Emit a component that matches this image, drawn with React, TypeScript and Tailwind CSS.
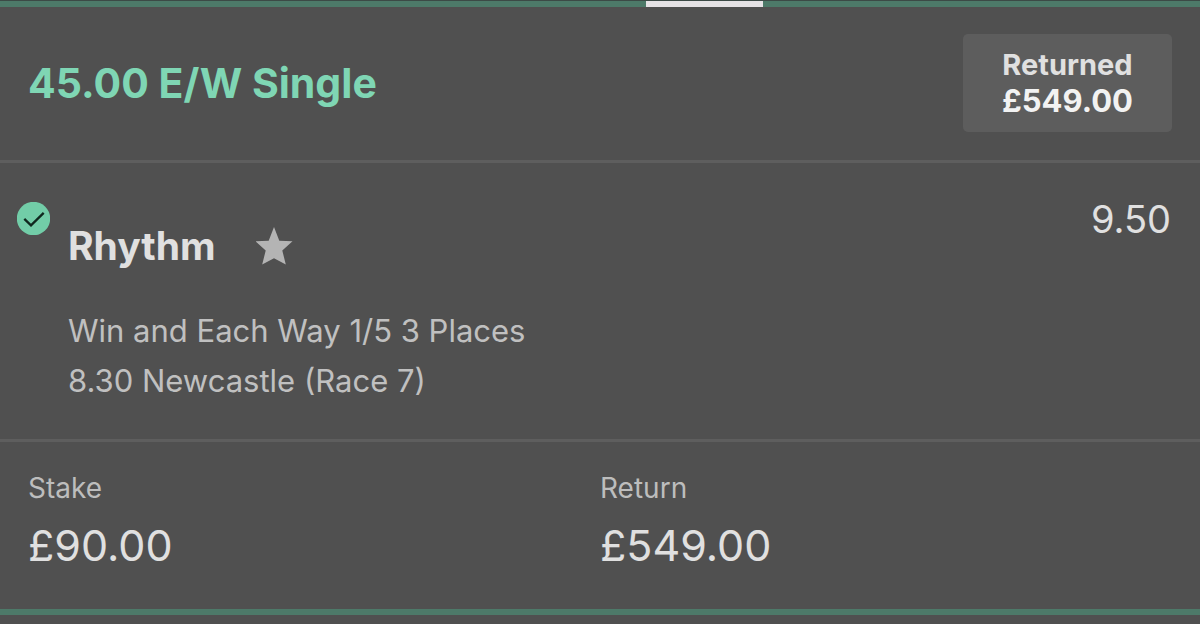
export default function App() {
  return (
    <main className="flex min-h-screen flex-col bg-[#505050] font-['Inter',sans-serif] text-[#e0e0e0]">
      <div className="h-[7px] border-t border-[#3c4a46] bg-[#4d7a69]">
        <div className="ml-[53.8%] h-[6px] w-[117px] bg-[#e6e3e6]" />
      </div>
      <header className="flex items-center justify-between border-b-3 border-[#5e5e5e] px-7 pt-[27px] pb-7">
        <h1 className="text-[41px] leading-[48px] font-bold text-[#7fd6b4]">45.00 E/W Single</h1>
        <div className="flex flex-col rounded-[5px] bg-[#5d5d5d] px-[39px] py-[13px] text-center font-bold">
          <span className="text-[29px] leading-[36px]">Returned</span>
          <span className="text-[31px] leading-[36px] text-[#f2f2f2]">£549.00</span>
        </div>
      </header>
      <section className="flex items-start border-b-3 border-[#5e5e5e] pt-[39px] pr-[29px] pb-[33px] pl-[17px]">
        <svg viewBox="0 0 33 33" className="h-[33px] w-[33px]" role="img" aria-label="Won">
          <circle cx="16.5" cy="16.5" r="16.7" fill="#72cda8" />
          <path d="M7.3 16.8L14 23.3L26.7 10.9" fill="none" stroke="#10281f" strokeWidth="2.3" />
        </svg>
        <div className="ml-[18px] flex-1">
          <div className="flex items-center gap-10 pt-5">
            <h2 className="text-[39px] leading-[48px] font-bold">Rhythm</h2>
            <svg viewBox="0 0 37 38" className="h-[38px] w-[37px]" role="img" aria-label="Favourite">
              <path
                d="M18 0L23.3 13.7L36.5 14.3L26.3 23.5L29.8 37.6L18 31.2L6.2 37.6L9.7 23.5L-.5 14.3L12.7 13.7Z"
                fill="#b4b4b4"
              />
            </svg>
          </div>
          <p className="mt-9 text-[31px] leading-[50px] text-[#c0c0c0]">Win and Each Way 1/5 3 Places</p>
          <p className="text-[31px] leading-[50px] text-[#c0c0c0]">8.30 Newcastle (Race 7)</p>
        </div>
        <span className="text-[38px] leading-[34px]">9.50</span>
      </section>
      <dl className="grid grid-cols-2 border-b-6 border-[#4d7a69] px-7 pt-7 pb-9">
        <div>
          <dt className="text-[28px] leading-[36px] text-[#bdbdbd]">Stake</dt>
          <dd className="mt-[11px] text-[43px] leading-[56px]">£90.00</dd>
        </div>
        <div>
          <dt className="text-[28px] leading-[36px] text-[#bdbdbd]">Return</dt>
          <dd className="mt-[11px] text-[43px] leading-[56px]">£549.00</dd>
        </div>
      </dl>
    </main>
  );
}
